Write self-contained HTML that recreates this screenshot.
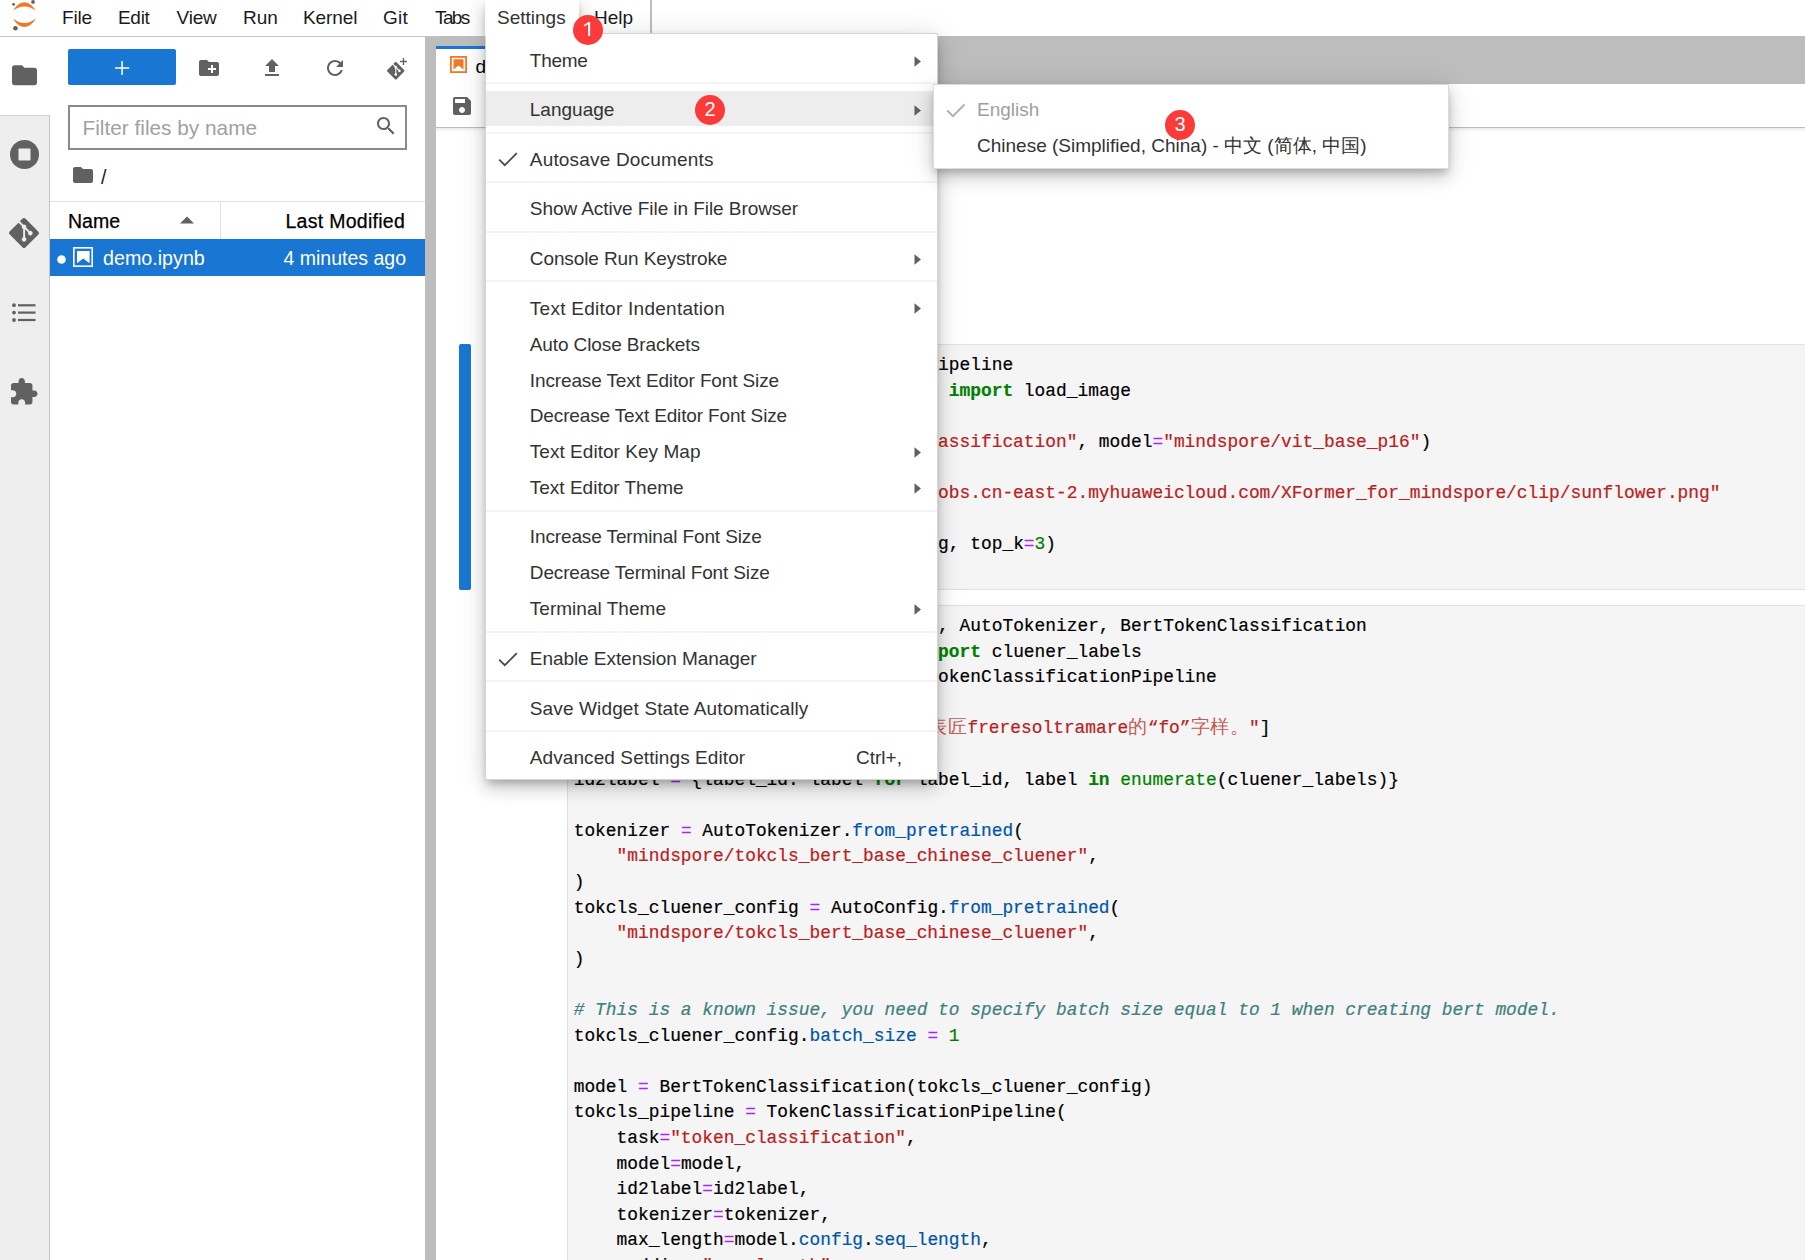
<!DOCTYPE html>
<html><head><meta charset="utf-8"><style>
*{box-sizing:border-box;margin:0;padding:0}
html,body{width:1805px;height:1260px;overflow:hidden;background:#fff;font-family:"Liberation Sans",sans-serif;position:relative}
.a{position:absolute}
.t{position:absolute;white-space:pre;line-height:1}
svg{position:absolute;overflow:visible}
.code{position:absolute;font-family:"Liberation Mono",monospace;font-size:17.86px;line-height:25.6px;color:#000;white-space:pre;left:573.7px;-webkit-text-stroke:0.2px currentColor}
.k{color:#008000;font-weight:bold}
.o{color:#aa22ff}
.s{color:#ba2121}
.n{color:#008000}
.p{color:#0055aa}
.c{color:#408080;font-style:italic}
.b{color:#008000}
.cj{display:inline-block;width:19.5px;text-align:left;font-size:18.5px;-webkit-text-stroke:0;color:#c55a5a}
.badge{position:absolute;width:30px;height:30px;border-radius:50%;background:#fb3a3a}
</style></head><body>
<div class="a" style="left:0px;top:0px;width:1805px;height:36px;background:#fff"></div>
<div class="a" style="left:0px;top:36px;width:1805px;height:1px;background:#c4c4c4"></div>
<div class="a" style="left:0px;top:37px;width:49px;height:1223px;background:#eeeeee"></div>
<div class="a" style="left:49px;top:37px;width:1px;height:1223px;background:#c4c4c4"></div>
<div class="a" style="left:0px;top:37px;width:50px;height:78px;background:#fff"></div>
<div class="a" style="left:0px;top:114.5px;width:49px;height:1px;background:#d6d6d6"></div>
<div class="a" style="left:50px;top:37px;width:375px;height:1223px;background:#fff"></div>
<div class="a" style="left:425px;top:37px;width:11px;height:1223px;background:#bdbdbd"></div>
<div class="a" style="left:436px;top:36px;width:1369px;height:48px;background:#bdbdbd"></div>
<div class="a" style="left:436px;top:46px;width:300px;height:38px;background:#fff"></div>
<div class="a" style="left:436px;top:46px;width:300px;height:3px;background:#1976d2"></div>
<div class="a" style="left:436px;top:84px;width:1369px;height:43px;background:#fff"></div>
<div class="a" style="left:436px;top:127px;width:1369px;height:1px;background:#bdbdbd"></div>
<div class="a" style="left:436px;top:128px;width:1369px;height:1132px;background:#fff"></div>
<div class="a" style="left:436px;top:128px;width:1369px;height:4px;background:linear-gradient(#00000014,#00000000)"></div>
<div class="a" style="left:567px;top:344px;width:1238px;height:246px;background:#f5f5f5;border:1px solid #e0e0e0;border-right:none"></div>
<div class="a" style="left:567px;top:605px;width:1238px;height:700px;background:#f5f5f5;border:1px solid #e0e0e0;border-right:none"></div>
<div class="a" style="left:459px;top:344px;width:12px;height:246px;background:#1976d2;border-radius:2px"></div>
<div class="code" style="top:353.34px"><span class="k">from</span> xformer.<span class="p">nlp</span>.<span class="p">pipeline</span> <span class="k">import</span> pipeline
<span class="k">from</span> xformer.<span class="p">pipelines</span>.<span class="p">image_utils</span> <span class="k">import</span> load_image

imagepipeline <span class="o">=</span> pipeline(<span class="s">&quot;image_classification&quot;</span>, model<span class="o">=</span><span class="s">&quot;mindspore/vit_base_p16&quot;</span>)

image_url <span class="o">=</span> <span class="s">&quot;s3://mindspore-xxxxx.obs.cn-east-2.myhuaweicloud.com/XFormer_for_mindspore/clip/sunflower.png&quot;</span>

results <span class="o">=</span> imagepipeline.<span class="p">predict</span>(img, top_k<span class="o">=</span><span class="n">3</span>)</div>
<div class="code" style="top:614.04px"><span class="k">from</span> xformer.<span class="p">nlp</span> <span class="k">import</span> AutoConfig, AutoTokenizer, BertTokenClassification
<span class="k">from</span> xformer.<span class="p">nlp</span>.<span class="p">datasets</span>.<span class="p">label</span> <span class="k">import</span> cluener_labels
<span class="k">from</span> xformer.<span class="p">nlp</span>.<span class="p">pipeline</span> <span class="k">import</span> TokenClassificationPipeline

text <span class="o">=</span> [<span class="s">&quot;Lorem ipsum dol<span class="cj">在</span><span class="cj">那</span><span class="cj">里</span><span class="cj">看</span><span class="cj">到</span><span class="cj">表</span><span class="cj">匠</span>freresoltramare<span class="cj">的</span>“fo”<span class="cj">字</span><span class="cj">样</span><span class="cj">。</span>&quot;</span>]

id2label <span class="o">=</span> {label_id: label <span class="k">for</span> label_id, label <span class="k">in</span> <span class="b">enumerate</span>(cluener_labels)}

tokenizer <span class="o">=</span> AutoTokenizer.<span class="p">from_pretrained</span>(
    <span class="s">&quot;mindspore/tokcls_bert_base_chinese_cluener&quot;</span>,
)
tokcls_cluener_config <span class="o">=</span> AutoConfig.<span class="p">from_pretrained</span>(
    <span class="s">&quot;mindspore/tokcls_bert_base_chinese_cluener&quot;</span>,
)

<span class="c"># This is a known issue, you need to specify batch size equal to 1 when creating bert model.</span>
tokcls_cluener_config.<span class="p">batch_size</span> <span class="o">=</span> <span class="n">1</span>

model <span class="o">=</span> BertTokenClassification(tokcls_cluener_config)
tokcls_pipeline <span class="o">=</span> TokenClassificationPipeline(
    task<span class="o">=</span><span class="s">&quot;token_classification&quot;</span>,
    model<span class="o">=</span>model,
    id2label<span class="o">=</span>id2label,
    tokenizer<span class="o">=</span>tokenizer,
    max_length<span class="o">=</span>model.<span class="p">config</span>.<span class="p">seq_length</span>,
    padding<span class="o">=</span><span class="s">&quot;max_length&quot;</span>,</div>
<svg style="left:5px;top:0" width="40" height="36" viewBox="0 0 40 36">
  <path d="M8.2 10.6 C11.5 5 15.5 2.3 19.4 2.3 C23.3 2.3 27.3 5 30.7 10.6 C26.8 7.8 23.2 6.6 19.4 6.6 C15.6 6.6 12 7.8 8.2 10.6Z" fill="#f37726"/>
  <path d="M8.2 18.7 C11.5 24.3 15.5 26.9 19.4 26.9 C23.3 26.9 27.3 24.3 30.7 18.7 C26.8 21.5 23.2 22.9 19.4 22.9 C15.6 22.9 12 21.5 8.2 18.7Z" fill="#f37726"/>
  <circle cx="8.6" cy="4.3" r="1.4" fill="#616161"/>
  <circle cx="28" cy="1.9" r="1.9" fill="#616161"/>
  <circle cx="10.4" cy="28.3" r="2.3" fill="#616161"/>
</svg>
<div class="t" style="left:62.0px;top:8.22px;font-size:19px;color:#1a1a1a;letter-spacing:-0.2px">File</div>
<div class="t" style="left:118.0px;top:8.22px;font-size:19px;color:#1a1a1a;letter-spacing:-0.3px">Edit</div>
<div class="t" style="left:176.5px;top:8.22px;font-size:19px;color:#1a1a1a;letter-spacing:-0.2px">View</div>
<div class="t" style="left:243.0px;top:8.22px;font-size:19px;color:#1a1a1a;letter-spacing:0px">Run</div>
<div class="t" style="left:303.0px;top:8.22px;font-size:19px;color:#1a1a1a;letter-spacing:-0.1px">Kernel</div>
<div class="t" style="left:383.0px;top:8.22px;font-size:19px;color:#1a1a1a;letter-spacing:0.3px">Git</div>
<div class="t" style="left:435.0px;top:8.22px;font-size:19px;color:#1a1a1a;letter-spacing:-1.6px">Tabs</div>
<svg style="left:11.5px;top:63.7px" width="25" height="22.5" viewBox="2 3 20 18"><path fill="#616161" d="M10 4H4c-1.1 0-1.99.9-1.99 2L2 18c0 1.1.9 2 2 2h16c1.1 0 2-.9 2-2V8c0-1.1-.9-2-2-2h-8l-2-2z"/></svg>
<svg style="left:9.6px;top:140px" width="29" height="29" viewBox="0 0 29 29"><circle cx="14.5" cy="14.5" r="14.5" fill="#616161"/><rect x="8.5" y="8.5" width="12" height="12" rx="0.8" fill="#eeeeee"/></svg>
<svg style="left:9px;top:218px" width="30" height="30" viewBox="0 0 24 24"><path fill="#616161" d="M23.546 10.93L13.067.452c-.604-.603-1.582-.603-2.188 0L8.708 2.627l2.76 2.76c.645-.215 1.379-.07 1.889.441.516.515.658 1.258.438 1.9l2.658 2.66c.645-.223 1.387-.078 1.9.435.721.72.721 1.884 0 2.604-.719.719-1.881.719-2.6 0-.539-.541-.674-1.337-.404-1.996L12.86 8.955v6.525c.176.086.342.203.488.348.713.721.713 1.883 0 2.6-.719.721-1.889.721-2.609 0-.719-.719-.719-1.879 0-2.598.182-.18.387-.316.605-.406V8.835c-.217-.091-.424-.222-.6-.401-.545-.545-.676-1.342-.396-2.009L7.636 3.7.45 10.881c-.6.605-.6 1.584 0 2.189l10.48 10.477c.604.604 1.582.604 2.186 0l10.43-10.43c.605-.603.605-1.582 0-2.187"/></svg>
<svg style="left:12px;top:303px" width="25" height="20" viewBox="0 0 25 20"><circle cx="2" cy="2.2" r="1.9" fill="#616161"/><circle cx="2" cy="9.6" r="1.9" fill="#616161"/><circle cx="2" cy="17" r="1.9" fill="#616161"/><rect x="6" y="1.2" width="17.5" height="2.2" fill="#616161"/><rect x="6" y="8.5" width="17.5" height="2.2" fill="#616161"/><rect x="6" y="15.9" width="17.5" height="2.2" fill="#616161"/></svg>
<svg style="left:11.1px;top:377.6px" width="26.5" height="26.5" viewBox="2 1 21 21"><path fill="#616161" d="M20.5 11H19V7c0-1.1-.9-2-2-2h-4V3.5C13 2.12 11.88 1 10.5 1S8 2.12 8 3.5V5H4c-1.1 0-1.99.9-1.99 2v3.8H3.5c1.49 0 2.7 1.21 2.7 2.7s-1.21 2.7-2.7 2.7H2V20c0 1.1.9 2 2 2h3.8v-1.5c0-1.49 1.21-2.7 2.7-2.7 1.49 0 2.7 1.21 2.7 2.7V22H17c1.1 0 2-.9 2-2v-4h1.5c1.380 0 2.5-1.12 2.5-2.5S21.88 11 20.5 11z"/></svg>
<div class="a" style="left:68px;top:49px;width:108px;height:36px;background:#1976d2;border-radius:2px"></div>
<svg style="left:114.8px;top:61px" width="14.2" height="14" viewBox="0 0 14.2 14"><rect x="6.35" y="0" width="1.5" height="14" fill="#fff"/><rect x="0" y="6.25" width="14.2" height="1.5" fill="#fff"/></svg>
<svg style="left:197px;top:56px" width="24" height="24" viewBox="0 0 24 24"><path fill="#616161" d="M20 6h-8l-2-2H4c-1.11 0-1.99.89-1.99 2L2 18c0 1.11.89 2 2 2h16c1.11 0 2-.89 2-2V8c0-1.11-.89-2-2-2zm-1 8h-3v3h-2v-3h-3v-2h3V9h2v3h3v2z"/></svg>
<svg style="left:260px;top:56px" width="24" height="24" viewBox="0 0 24 24"><path fill="#616161" d="M9 16h6v-6h4l-7-7-7 7h4zm-4 2h14v2H5z"/></svg>
<svg style="left:323px;top:56px" width="24" height="24" viewBox="0 0 24 24"><path fill="#616161" d="M17.65 6.35C16.2 4.9 14.21 4 12 4c-4.42 0-7.99 3.58-7.99 8s3.57 8 7.99 8c3.73 0 6.84-2.55 7.73-6h-2.08c-.82 2.33-3.04 4-5.65 4-3.31 0-6-2.69-6-6s2.69-6 6-6c1.66 0 3.14.69 4.22 1.78L13 11h7V4l-2.35 2.35z"/></svg>
<svg style="left:387.2px;top:61.5px" width="17.5" height="17.5" viewBox="0 0 24 24"><path fill="#616161" d="M23.546 10.93L13.067.452c-.604-.603-1.582-.603-2.188 0L8.708 2.627l2.76 2.76c.645-.215 1.379-.07 1.889.441.516.515.658 1.258.438 1.9l2.658 2.66c.645-.223 1.387-.078 1.9.435.721.72.721 1.884 0 2.604-.719.719-1.881.719-2.6 0-.539-.541-.674-1.337-.404-1.996L12.86 8.955v6.525c.176.086.342.203.488.348.713.721.713 1.883 0 2.6-.719.721-1.889.721-2.609 0-.719-.719-.719-1.879 0-2.598.182-.18.387-.316.605-.406V8.835c-.217-.091-.424-.222-.6-.401-.545-.545-.676-1.342-.396-2.009L7.636 3.7.45 10.881c-.6.605-.6 1.584 0 2.189l10.48 10.477c.604.604 1.582.604 2.186 0l10.43-10.43c.605-.603.605-1.582 0-2.187"/></svg>
<svg style="left:400px;top:58.3px" width="7" height="7" viewBox="0 0 7 7"><rect x="2.8" y="0" width="1.4" height="7" fill="#616161"/><rect x="0" y="2.8" width="7" height="1.4" fill="#616161"/></svg>
<div class="a" style="left:68px;top:105px;width:339px;height:45px;border:2px solid #8a8a8a;background:#fff"></div>
<div class="t" style="left:82.5px;top:118.19px;font-size:20.8px;color:#a0a0a0;">Filter files by name</div>
<svg style="left:374px;top:114px" width="24" height="24" viewBox="0 0 24 24"><path fill="#616161" d="M15.5 14h-.79l-.28-.27C15.41 12.59 16 11.11 16 9.5 16 5.91 13.09 3 9.5 3S3 5.91 3 9.5 5.91 16 9.5 16c1.61 0 3.09-.59 4.23-1.57l.27.28v.79l5 4.99L20.49 19l-4.99-5zm-6 0C7.01 14 5 11.99 5 9.5S7.01 5 9.5 5 14 7.01 14 9.5 11.99 14 9.5 14z"/></svg>
<svg style="left:72.9px;top:165.8px" width="20" height="18" viewBox="2 3 20 18"><path fill="#616161" d="M10 4H4c-1.1 0-1.99.9-1.99 2L2 18c0 1.1.9 2 2 2h16c1.1 0 2-.9 2-2V8c0-1.1-.9-2-2-2h-8l-2-2z"/></svg>
<div class="t" style="left:101px;top:168.49px;font-size:19.5px;color:#1a1a1a;">/</div>
<div class="a" style="left:50px;top:201px;width:375px;height:1px;background:#e0e0e0"></div>
<div class="a" style="left:220px;top:202px;width:1px;height:37px;background:#e0e0e0"></div>
<div class="t" style="left:68px;top:212.29px;font-size:19.5px;color:#000;-webkit-text-stroke:0.25px #000">Name</div>
<svg style="left:180px;top:216px" width="14" height="8" viewBox="0 0 14 8"><path d="M0 7.5L7 0.5L14 7.5Z" fill="#616161"/></svg>
<div class="t" style="left:285.5px;top:212.29px;font-size:19.5px;color:#000;-webkit-text-stroke:0.25px #000;letter-spacing:0.28px">Last Modified</div>
<div class="a" style="left:50px;top:239px;width:375px;height:37px;background:#1976d2"></div>
<svg style="left:56.7px;top:254.5px" width="9" height="9" viewBox="0 0 9 9"><circle cx="4.5" cy="4.5" r="4.3" fill="#fff"/></svg>
<svg style="left:72.9px;top:247px" width="20" height="20" viewBox="0 0 20 20"><rect x="0.8" y="0.8" width="18.4" height="18.4" fill="none" stroke="#fff" stroke-width="1.6"/><path d="M4 4H16.6V16.2L10.3 11.4L4 16.2Z" fill="#fff"/></svg>
<div class="t" style="left:103px;top:249.32px;font-size:19.7px;color:#fff;">demo.ipynb</div>
<div class="t" style="left:283.5px;top:249.49px;font-size:19.5px;color:#fff;">4 minutes ago</div>
<svg style="left:450px;top:56px" width="17" height="17" viewBox="0 0 17 17"><rect x="0.9" y="0.9" width="15.2" height="15.2" fill="none" stroke="#f37726" stroke-width="1.8"/><path d="M3.5 3.3H13.5V13.6L8.5 9.5L3.5 13.6Z" fill="#f37726"/></svg>
<div class="t" style="left:475.5px;top:56.92px;font-size:19px;color:#000;">demo.ipynb</div>
<svg style="left:450px;top:94px" width="24" height="24" viewBox="0 0 24 24"><path fill="#616161" d="M17 3H5c-1.11 0-2 .9-2 2v14c0 1.1.89 2 2 2h14c1.1 0 2-.9 2-2V7l-4-4zm-5 16c-1.66 0-3-1.34-3-3s1.34-3 3-3 3 1.34 3 3-1.34 3-3 3zm3-10H5V5h10v4z"/></svg>
<div class="t" style="left:594px;top:7.72px;font-size:19px;color:#1a1a1a;">Help</div>
<div class="a" style="left:649.5px;top:0px;width:2px;height:33px;background:#bdbdbd"></div>
<div class="a" style="left:485px;top:33px;width:453px;height:747px;background:#fff;border:1px solid #d4d4d4;border-top-width:1.5px;box-shadow:0 4.5px 7.5px -1.5px rgba(0,0,0,.2),0 9px 15px 0 rgba(0,0,0,.14),0 1.5px 27px 0 rgba(0,0,0,.12)"></div>
<div class="a" style="left:485px;top:0px;width:94px;height:36px;background:#fff;box-shadow:0 4.5px 7.5px -1.5px rgba(0,0,0,.2),0 9px 15px 0 rgba(0,0,0,.14),0 1.5px 27px 0 rgba(0,0,0,.12);clip-path:inset(-40px -40px 0 -40px)"></div>
<div class="t" style="left:497px;top:7.72px;font-size:19px;color:#333;">Settings</div>
<div class="a" style="left:486px;top:91px;width:450px;height:35px;background:#ededed"></div>
<div class="t" style="left:529.8px;top:50.92px;font-size:19px;color:#333;letter-spacing:-0.250px">Theme</div>
<svg style="left:914px;top:55.5px" width="8" height="11" viewBox="0 0 8 11"><path d="M0.5 0.3L7 5.5L0.5 10.7Z" fill="#616161"/></svg>
<div class="t" style="left:529.8px;top:100.42px;font-size:19px;color:#333;letter-spacing:0.000px">Language</div>
<svg style="left:914px;top:105.0px" width="8" height="11" viewBox="0 0 8 11"><path d="M0.5 0.3L7 5.5L0.5 10.7Z" fill="#616161"/></svg>
<div class="t" style="left:529.8px;top:149.92px;font-size:19px;color:#333;letter-spacing:0.176px">Autosave Documents</div>
<svg style="left:498px;top:152.0px" width="20" height="15" viewBox="0 0 20 15"><path d="M1.2 7.6L6.8 13.2L18.8 1.2" fill="none" stroke="#4a4a4a" stroke-width="1.7"/></svg>
<div class="t" style="left:529.8px;top:199.42px;font-size:19px;color:#333;letter-spacing:-0.065px">Show Active File in File Browser</div>
<div class="t" style="left:529.8px;top:248.92px;font-size:19px;color:#333;letter-spacing:-0.100px">Console Run Keystroke</div>
<svg style="left:914px;top:253.5px" width="8" height="11" viewBox="0 0 8 11"><path d="M0.5 0.3L7 5.5L0.5 10.7Z" fill="#616161"/></svg>
<div class="t" style="left:529.8px;top:298.62px;font-size:19px;color:#333;letter-spacing:0.268px">Text Editor Indentation</div>
<svg style="left:914px;top:303.2px" width="8" height="11" viewBox="0 0 8 11"><path d="M0.5 0.3L7 5.5L0.5 10.7Z" fill="#616161"/></svg>
<div class="t" style="left:529.8px;top:334.62px;font-size:19px;color:#333;letter-spacing:-0.111px">Auto Close Brackets</div>
<div class="t" style="left:529.8px;top:370.52px;font-size:19px;color:#333;letter-spacing:-0.131px">Increase Text Editor Font Size</div>
<div class="t" style="left:529.8px;top:406.42px;font-size:19px;color:#333;letter-spacing:-0.145px">Decrease Text Editor Font Size</div>
<div class="t" style="left:529.8px;top:442.42px;font-size:19px;color:#333;letter-spacing:0.039px">Text Editor Key Map</div>
<svg style="left:914px;top:447.0px" width="8" height="11" viewBox="0 0 8 11"><path d="M0.5 0.3L7 5.5L0.5 10.7Z" fill="#616161"/></svg>
<div class="t" style="left:529.8px;top:478.42px;font-size:19px;color:#333;letter-spacing:0.000px">Text Editor Theme</div>
<svg style="left:914px;top:483.0px" width="8" height="11" viewBox="0 0 8 11"><path d="M0.5 0.3L7 5.5L0.5 10.7Z" fill="#616161"/></svg>
<div class="t" style="left:529.8px;top:527.42px;font-size:19px;color:#333;letter-spacing:-0.123px">Increase Terminal Font Size</div>
<div class="t" style="left:529.8px;top:563.42px;font-size:19px;color:#333;letter-spacing:-0.135px">Decrease Terminal Font Size</div>
<div class="t" style="left:529.8px;top:599.42px;font-size:19px;color:#333;letter-spacing:0.023px">Terminal Theme</div>
<svg style="left:914px;top:604.0px" width="8" height="11" viewBox="0 0 8 11"><path d="M0.5 0.3L7 5.5L0.5 10.7Z" fill="#616161"/></svg>
<div class="t" style="left:529.8px;top:649.42px;font-size:19px;color:#333;letter-spacing:-0.057px">Enable Extension Manager</div>
<svg style="left:498px;top:651.5px" width="20" height="15" viewBox="0 0 20 15"><path d="M1.2 7.6L6.8 13.2L18.8 1.2" fill="none" stroke="#4a4a4a" stroke-width="1.7"/></svg>
<div class="t" style="left:529.8px;top:698.72px;font-size:19px;color:#333;letter-spacing:0.133px">Save Widget State Automatically</div>
<div class="t" style="left:529.8px;top:748.42px;font-size:19px;color:#333;letter-spacing:0.087px">Advanced Settings Editor</div>
<div class="t" style="left:856px;top:748.42px;font-size:19px;color:#333;">Ctrl+,</div>
<div class="a" style="left:486px;top:81.8px;width:451px;height:2px;background:#f4f4f4"></div>
<div class="a" style="left:486px;top:131.5px;width:451px;height:2px;background:#f4f4f4"></div>
<div class="a" style="left:486px;top:181px;width:451px;height:2px;background:#f4f4f4"></div>
<div class="a" style="left:486px;top:230.5px;width:451px;height:2px;background:#f4f4f4"></div>
<div class="a" style="left:486px;top:280px;width:451px;height:2px;background:#f4f4f4"></div>
<div class="a" style="left:486px;top:509.5px;width:451px;height:2px;background:#f4f4f4"></div>
<div class="a" style="left:486px;top:630.8px;width:451px;height:2px;background:#f4f4f4"></div>
<div class="a" style="left:486px;top:680.4px;width:451px;height:2px;background:#f4f4f4"></div>
<div class="a" style="left:486px;top:730.1px;width:451px;height:2px;background:#f4f4f4"></div>
<div class="a" style="left:933px;top:83.5px;width:515.5px;height:85px;background:#fff;box-shadow:0 4.5px 7.5px -1.5px rgba(0,0,0,.2),0 9px 15px 0 rgba(0,0,0,.14),0 1.5px 27px 0 rgba(0,0,0,.12);border:1px solid #dcdcdc"></div>
<svg style="left:946px;top:102px" width="20" height="16" viewBox="0 0 20 16"><path d="M1.2 8.5L7 14.2L18.5 2.5" fill="none" stroke="#b0b0b0" stroke-width="2"/></svg>
<div class="t" style="left:977px;top:99.92px;font-size:19px;color:#9e9e9e;">English</div>
<div class="t" style="left:977px;top:135.9px;font-size:19px;color:#333">Chinese (Simplified, China) - 中文 (简体, 中国)</div>
<div class="badge" style="left:573px;top:15px"></div>
<svg style="left:580px;top:20px" width="16" height="18" viewBox="0 0 16 18"><path d="M9.1 2.2V16" stroke="#fff" stroke-width="2.1" fill="none"/><path d="M9.4 2.4L4 5.9" stroke="#fff" stroke-width="1.7" fill="none"/></svg>
<div class="badge" style="left:695px;top:95px"></div>
<div class="t" style="left:704.4px;top:99.27px;font-size:20px;color:#fff;">2</div>
<div class="badge" style="left:1165px;top:110px"></div>
<div class="t" style="left:1174.4px;top:114.27px;font-size:20px;color:#fff;">3</div>
</body></html>
